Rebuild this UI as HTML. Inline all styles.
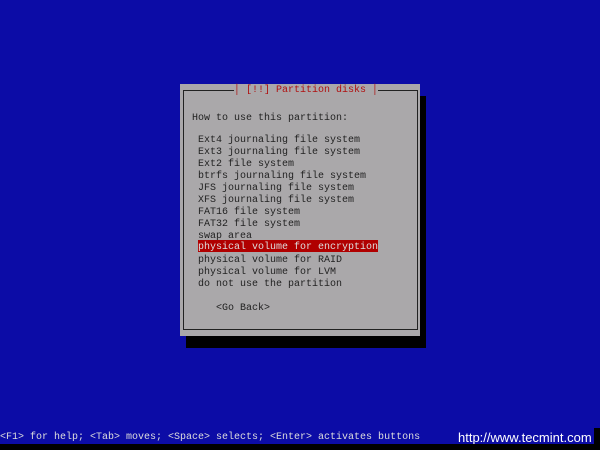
<!DOCTYPE html>
<html><head><style>
body{margin:0;width:600px;height:450px;background:#0c0ca6;position:relative;overflow:hidden;font-family:"Liberation Mono","DejaVu Sans Mono",monospace;font-size:10px;}
.a{position:absolute;white-space:pre;line-height:12px;}
#sh{position:absolute;left:186px;top:96px;width:240px;height:252px;background:#000;}
#bx{position:absolute;left:180px;top:84px;width:240px;height:252px;background:#aaa8aa;}
#fr{position:absolute;left:183px;top:90px;width:233px;height:238px;border:1px solid #222;}
.t{color:#222;}
</style></head><body>
<div id="sh"></div><div id="bx"></div><div id="fr"></div>
<div class="a" style="left:234px;top:85px;background:#aaa8aa;color:#b01010;">│ [!!] Partition disks │</div>
<div class="a t" style="left:192px;top:113px;">How to use this partition:</div>
<div class="a t" style="left:198px;top:135px;">Ext4 journaling file system
Ext3 journaling file system
Ext2 file system
btrfs journaling file system
JFS journaling file system
XFS journaling file system
FAT16 file system
FAT32 file system
swap area</div>
<div class="a" style="left:198px;top:240px;background:#b00000;color:#ddd;width:180px;padding-top:3px;height:9px;line-height:9px;">physical volume for encryption</div>
<div class="a t" style="left:198px;top:255px;">physical volume for RAID
physical volume for LVM
do not use the partition</div>
<div class="a t" style="left:216px;top:303px;">&lt;Go Back&gt;</div>
<div class="a" style="left:0;top:432px;color:#ddd;">&lt;F1&gt; for help; &lt;Tab&gt; moves; &lt;Space&gt; selects; &lt;Enter&gt; activates buttons</div>
<div class="a" style="left:458px;top:430px;color:#fff;font-family:'Liberation Sans',sans-serif;font-size:13px;line-height:16px;">http://www.tecmint.com</div>
<div style="position:absolute;left:0;top:444px;width:600px;height:6px;background:#000;"></div>
<div style="position:absolute;left:594px;top:428px;width:6px;height:22px;background:#000;"></div>
</body></html>
